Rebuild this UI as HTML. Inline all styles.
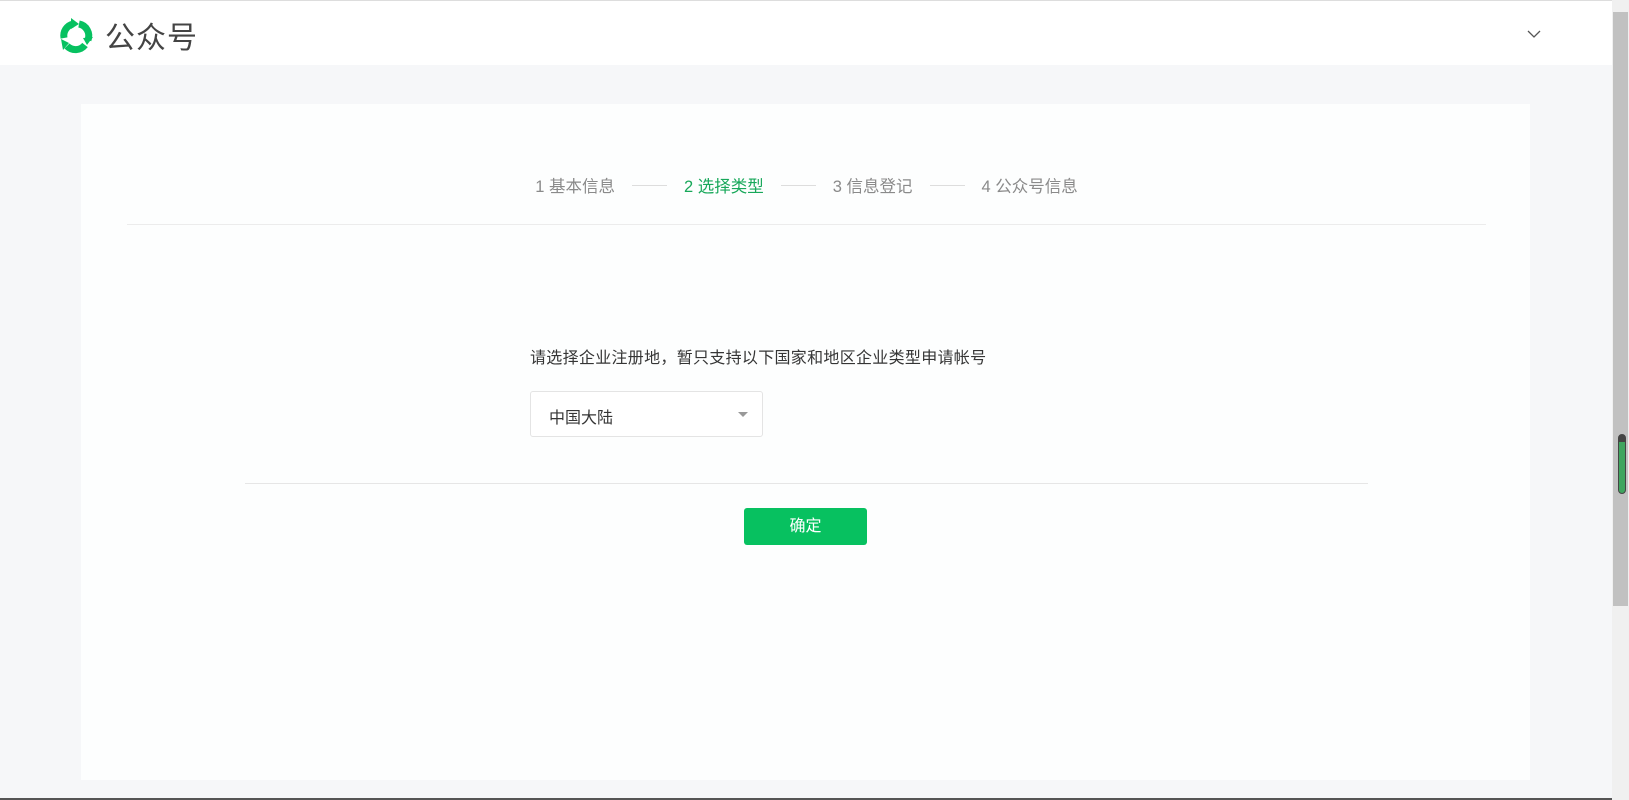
<!DOCTYPE html>
<html><head><meta charset="utf-8"><style>
*{margin:0;padding:0;box-sizing:border-box}
body{width:1629px;height:800px;overflow:hidden;background:#f6f7f9;font-family:"Liberation Sans","Noto Sans CJK SC",sans-serif;position:relative}
.hd{position:absolute;left:0;top:0;width:1612px;height:65px;background:#fff;border-top:1px solid #ddd}
.logo{position:absolute;left:55px;top:15px}
.title{position:absolute;left:105px;top:12px;font-size:30px;color:#444;letter-spacing:1px}
.chev{position:absolute;left:1527px;top:28px}
.card{position:absolute;left:81px;top:104px;width:1449px;height:676px;background:#fdfefe}
.steps{position:absolute;top:173px;left:0;width:1612px;text-align:center;font-size:16.5px;color:#8a8a8a;padding-left:1px}
.steps span{display:inline-block;vertical-align:middle}
.steps .ln{width:35px;height:1px;background:#ddd;margin:0 17px}
.steps .on{color:#18a85a}
.hr1{position:absolute;left:127px;top:224px;width:1359px;height:1px;background:#ececec}
.prompt{position:absolute;left:530px;top:344px;font-size:16px;color:#353535;letter-spacing:0.3px}
.sel{position:absolute;left:530px;top:391px;width:233px;height:46px;border:1px solid #e4e4e4;border-radius:3px;background:#fff;font-size:16px;color:#353535;padding:12px 0 0 18px}
.sel i{position:absolute;right:14px;top:20px;border-left:5px solid transparent;border-right:5px solid transparent;border-top:5px solid #999}
.hr2{position:absolute;left:245px;top:483px;width:1123px;height:1px;background:#e6e6e6}
.btn{position:absolute;left:744px;top:508px;width:123px;height:37px;background:#07c160;border-radius:3px;color:#fff;font-size:16px;text-align:center;line-height:37px}
.sb{position:absolute;left:1612px;top:0;width:17px;height:800px;background:#f0f0f0}
.th{position:absolute;left:1613px;top:12px;width:15px;height:594px;background:#c1c1c1}
.gr{position:absolute;left:1618px;top:434px;width:8px;height:60px;background:#3fa55f;border:1px solid #444;border-radius:4px;border-top:8px solid #444}
.bot{position:absolute;left:0;top:798px;width:1612px;height:2px;background:#555}
</style></head><body>
<div class="hd">
<svg class="logo" width="42" height="40" viewBox="0 0 42 40"><g fill="none" stroke="#07c160" stroke-width="7" stroke-linecap="butt">
<path d="M9 22 A12 12 0 0 1 18 8"/><path d="M24 8 A12 12 0 0 1 33 24"/><path d="M30 29 A12 12 0 0 1 12 30"/></g>
<path d="M16 2 L24 8 L16 13Z" fill="#07c160"/><path d="M38 21 L32 29 L28 22Z" fill="#07c160"/><path d="M8 34 L6 23 L14 27Z" fill="#07c160"/></svg>
<div class="title">公众号</div>
<svg class="chev" width="14" height="10" viewBox="0 0 14 10"><path d="M1 2 L7 8 L13 2" fill="none" stroke="#555" stroke-width="1.3"/></svg>
</div>
<div class="card"></div>
<div class="steps"><span>1 基本信息</span><span class="ln"></span><span class="on">2 选择类型</span><span class="ln"></span><span>3 信息登记</span><span class="ln"></span><span>4 公众号信息</span></div>
<div class="hr1"></div>
<div class="prompt">请选择企业注册地，暂只支持以下国家和地区企业类型申请帐号</div>
<div class="sel">中国大陆<i></i></div>
<div class="hr2"></div>
<div class="btn">确定</div>
<div class="sb"></div><div class="th"></div><div class="gr"></div>
<div class="bot"></div>
</body></html>
